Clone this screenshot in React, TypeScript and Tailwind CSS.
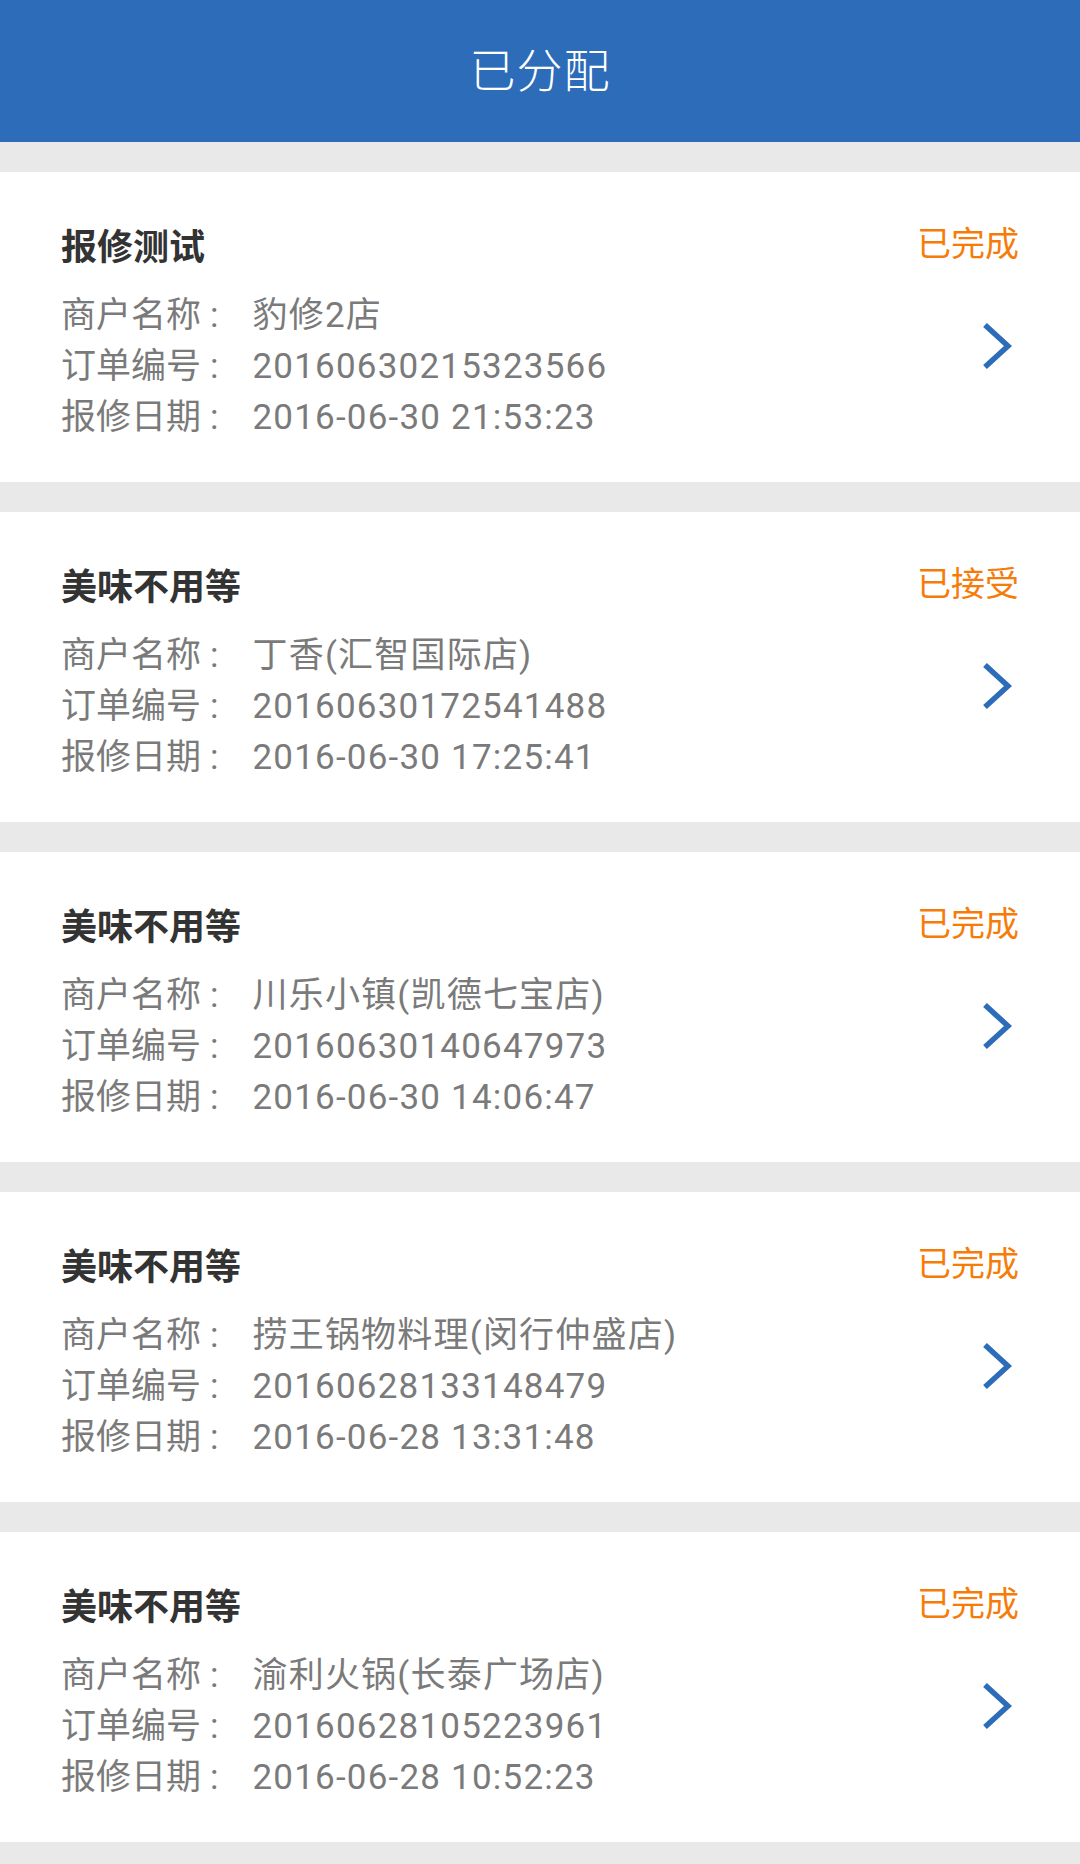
import React from 'react';

const orders = [
  { title: '报修测试', status: '已完成', shop: '豹修2店', no: '20160630215323566', date: '2016-06-30 21:53:23' },
  { title: '美味不用等', status: '已接受', shop: '丁香(汇智国际店)', no: '20160630172541488', date: '2016-06-30 17:25:41' },
  { title: '美味不用等', status: '已完成', shop: '川乐小镇(凯德七宝店)', no: '20160630140647973', date: '2016-06-30 14:06:47' },
  { title: '美味不用等', status: '已完成', shop: '捞王锅物料理(闵行仲盛店)', no: '20160628133148479', date: '2016-06-28 13:31:48' },
  { title: '美味不用等', status: '已完成', shop: '渝利火锅(长泰广场店)', no: '20160628105223961', date: '2016-06-28 10:52:23' },
];

const font = { fontFamily: 'Roboto, "Noto Sans CJK SC", sans-serif' };

function Row({ label, value }: { label: string; value: string }) {
  return (
    <div className="flex h-[51px] items-center text-[35px] text-[#7a7a7a]">
      <span>{label}</span>
      <span className="ml-[9px]">:</span>
      <span className="ml-[34px] tracking-[1.2px]">{value}</span>
    </div>
  );
}

export default function App() {
  return (
    <div className="min-h-[1864px] w-[1080px] bg-[#e9e9e9]" style={font}>
      {/* Header */}
      <div className="flex h-[142px] items-center justify-center bg-[#2c6cb9]">
        <h1 className="text-[46px] font-light tracking-[1px] text-white">已分配</h1>
      </div>

      {/* List */}
      <div className="flex flex-col gap-[30px] pt-[30px]">
        {orders.map((o, i) => (
          <div key={i} className="flex h-[310px] justify-between bg-white px-[61px] pt-[48px]">
            <div className="flex flex-col">
              <div className="mt-[2px] h-[52px] text-[36px] font-bold leading-[52px] text-[#333]">{o.title}</div>
              <div className="mt-[17px]">
                <Row label="商户名称" value={o.shop} />
                <Row label="订单编号" value={o.no} />
                <Row label="报修日期" value={o.date} />
              </div>
            </div>
            <div className="flex flex-col items-end">
              <div className="-mt-[2px] h-[52px] text-[34px] leading-[52px] text-[#f67c0a]">{o.status}</div>
              <svg className="mt-[53px] mr-[7px]" width="30" height="46" viewBox="0 0 30 46" fill="none">
                <path d="M3 2 L26 23 L3 44" stroke="#2c6cb9" strokeWidth="5.5" />
              </svg>
            </div>
          </div>
        ))}
      </div>
    </div>
  );
}
